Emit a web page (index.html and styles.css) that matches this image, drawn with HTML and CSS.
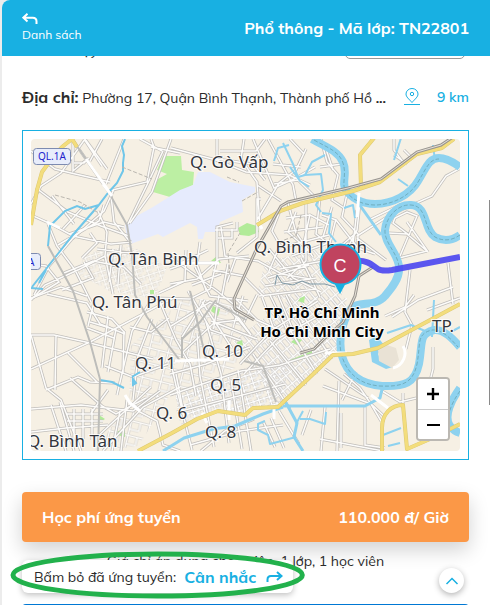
FILE: index.html
```html
<!DOCTYPE html>
<html lang="vi">

<head>
    <meta charset="UTF-8">
    <meta name="viewport" content="width=device-width, initial-scale=1.0">
    <title>Mã lớp: TN22801</title>
    <link rel="stylesheet" href="styles.css">
</head>

<body>
    <div class="app">
        <header class="topbar">
            <a class="back" href="#">
                <svg width="16" height="12" viewBox="0 0 16 12" fill="none" stroke="currentColor" stroke-width="2">
                    <path d="M5.500 .8 1.300 4.700l4.200 3.900M1.500 4.700h9.300q3.700 0 3.700 3.500V11" />
                </svg>
                <span>Danh sách</span>
            </a>
            <h1>Phổ thông - Mã lớp: TN22801</h1>
        </header>

        <main>
            <div class="row row-prev">
                <span class="prev-label">Số buổi dạy</span>
                <button class="outline-btn" type="button" aria-label="Chi tiết"></button>
            </div>

            <div class="row address">
                <p><strong>Địa chỉ:</strong> Phường 17, Quận Bình Thạnh, Thành phố Hồ <b>...</b></p>
                <a class="distance" href="#map">
                    <svg width="16" height="17" viewBox="0 0 16 17" fill="none" stroke="currentColor">
                        <path d="M8 14.500C5 11 2 9 2 6a6 5.500 0 0 1 12 0C14 9 11 11 8 14.500z" />
                        <circle cx="8" cy="6" r="1.700" />
                        <path d="M0 16.500h16" />
                    </svg>
                    <span>9 km</span>
                </a>
            </div>

            <div class="map-frame" id="map">
                <div class="map">
                    <svg class="map-canvas" viewBox="31 139 429 312" role="img" aria-label="Bản đồ">
                        <defs>
                            <pattern id="blocks" width="11" height="9" patternUnits="userSpaceOnUse" patternTransform="rotate(-18)">
                                <path d="M0 1.500h11M0 6h6M1.500 0v9M7 0v6" stroke="#c2c0bd" stroke-width="2.600" fill="none" />
                                <path d="M0 1.500h11M0 6h6M1.500 0v9M7 0v6" stroke="#fff" stroke-width="1.400" fill="none" />
                            </pattern>
                            <pattern id="blocks-steep" width="12" height="10" patternUnits="userSpaceOnUse" patternTransform="rotate(-40)">
                                <path d="M0 1.500h12M1.500 0v10M7.500 0v10" stroke="#c2c0bd" stroke-width="2.600" fill="none" />
                                <path d="M0 1.500h12M1.500 0v10M7.500 0v10" stroke="#fff" stroke-width="1.400" fill="none" />
                            </pattern>
                            <pattern id="blocks-wide" width="19" height="15" patternUnits="userSpaceOnUse" patternTransform="rotate(14)">
                                <path d="M0 1.500h19M1.500 0v15M11 1v9M1 10h10" stroke="#c2c0bd" stroke-width="2.600" fill="none" />
                                <path d="M0 1.500h19M1.500 0v15M11 1v9M1 10h10" stroke="#fff" stroke-width="1.400" fill="none" />
                            </pattern>
                            <!-- local streets, drawn twice: casing and fill -->
                            <g id="streets">
                                <path d="M31 151l24 18 16 4 39 9M72 139l36 52M31 204l10-18 20-13 24-34M36 188l32 24 33 14 28 10M52 196l22 28M85 139l22 30M84 139l18 27M102 139l-12 22M124 139l-18 45M114 189l-10 22-32 28-23 27-15 29M108 191l39-9 7-35-3-8M151 147l29 6M140 139l22 12M163 151l-16 34-19 39M130 223l22-31 19-53M73 142v29l12-10M74 163h10l5-5" />
                                <path d="M31 215l20 9 22 12 38 8 21-2M48 224l9 22 18 24 16 32M58 245l41-24 5-16M69 234l35-12 20 5M98 211l9 21-2 24-25 13-35 16-14 15M111 196l3 26 17 21M63 229l22-24M90 233l7 10-15 15M31 264l15 2 13 16-28 17M64 273l29-12 31 6 17 17M84 262l9 16-31 12M105 256l8 38M113 249l-4 33M121 245l-3 39M97 249l34 4" />
                                <path d="M31 335h23l36 8 63 16M31 369l59-27 32-17 53-28M31 335l15 53 15 12 20 51M56 335l-1 55M31 409l50-4 52 6 27-20M46 390l32-13 12 5 25 1M68 353l30 30M31 298l30-11 26 9M47 294l40 9 13 21 25 10M70 378l32 28 14 8 30-16M51 405l15 46M60 402l14 49M74 409v36M83 409v30M92 409v31M67 414h36M67 421h36M31 432l35-4 42-3M91 413l17-23" />
                                <path d="M87 312l25 7 13 14M90 322l20 6M94 302l-6 24M108 316l-6 52M116 329l-8 43M124 331l-1 42M87 328l27 10M105 366l28 11 35-13M150 302l-18 29-15 64M152 319l-14 37-5 44M130 327l21 5 18-14M157 295l19 45 14 24 6 32M138 411l19 10 6 24 17 6M120 411l-8 40M127 400l-6 51M97 437l54-50M103 451l40-44 37-20" />
                                <path d="M171 148l45 12 30 12 44 3M217 139v20l35 5 13 16M220 151h36l9-12M244 139l-3 20 16 23 3 45M253 139l21 49 20-9 21-12M268 139l25 46 3 16M257 185l24 16M261 199h-4v38l-20 16M257 220l22-37 17-13 10-21M274 184l24-4 20 20M289 175l21 10M273 164l28 3M290 139l14 15" />
                                <path d="M281 208l-9 23 8 14-11 26M286 218l24-3 19 10M288 203l8 30 17 24M306 201v60l-19 17M320 197l-4 37 19 15M296 212l-8 20 18 16M310 214l-7 33M284 232l39-5M287 246l42-11M292 256l36-13M280 269l54-10M268 278l41-13M265 286l51-8M259 296l57-7M269 249l24 29 28 14M301 258l19 39" />
                                <path d="M217 260l-7 29-20 10-39-1M217 260v-33l16-4M221 227l4 29 33 5 24 13 28 5M170 269l17-6 29 0M186 250l-1 31-26 12M200 242l-3 22 9 26M170 284l27-5 22-20 30-3M181 263l27-13M213 270l30 6 21 21M228 264l-6 32M221 274l-29 11M170 257l47 34 25 20M236 257l-9 25M195 267l15 29 38 5M215 230h22v-8M218 238h14v-9" />
                                <path d="M321 139l6 23 11 13-6 25 12 8M325 146l8 24M320 167l22-3M347 194l-5 23 16 17-1 39M360 202l-3 28-16 30M357 232l-24 21-2 23M322 215l14 5 22 28 17 6M332 207l-9 30M336 219l-8 32M357 210l-6 51M357 238l29 22M357 236l33-21 42-19 14-20 13-7M371 219l31-15M394 139v11l9 12M394 155l13 9M404 150l7 7" />
                                <path d="M395 218l12-6 10 4-8 19-16-12zM388 233l19 1 20 17M407 222l21 30M400 256l8-19M399 258l28-7M410 270l-5 42 7 13-6 24M448 263l5 41M427 310l33-12M392 317l26-17 35-13M385 316l20-9 9-12M433 347v22l-3 12M382 391l18 11 37-9M403 393v14M344 374l16 14 11 16 10 17M339 381l-2 70M325 369l43 29M323 386l48 18 14 13M365 407v38l20 3M320 439l63 12M341 413v35M325 407l-4 44M311 410l-9 25M356 372l-14 28" />
                                <path d="M192 450l-15-60-7-31M184 415l-8-41M214 447l-14-71-3-43M229 443l-8-69-15-52M242 449l-11-69M251 451l-13-81M263 421l12 26M271 418l13 30M279 411l20 33M190 445l50-14 43-6M201 451l24-20 29-12M170 395l71-24 39-6 50-16M177 412l108-28M170 374l36-10 44-17M240 364l32-34 46-29M253 354l37 55M270 341l36 44M287 325l30 49M300 311l30 45M244 374l33-35 45-25" />
                                <path d="M171 326l39-24 22 10 18 22M182 337l23-37M183 352l31-29 25-3M202 302l30 46M231 307l20 28M211 321l46 18M219 295l-5 31M234 297l23 23 20 9M243 296l-9 28M188 291l23 39 29 10M257 295l-13 27M262 297l14 38M270 295l19 39M278 295l15 35M286 295l17 34" />
                            </g>
                        </defs>

                        <rect x="31" y="139" width="429" height="312" fill="#f6f0e4" />

                        <path fill="#bcefa3" d="M163 156h18l1 14 12 2-1 13-23 12-17-5 5-13 9-5-10-4z" />
                        <path fill="#e6ebfd" d="M125 225l8-7 20-11 27-17 13-5 5-13h12l20 10 25 5v5l-13 8 1 12-23 10-3 10h-12l-2 7h-5l-1-12-7-4-27 14-5-3-22 8-8 3z" />

                        <!-- dense blocks -->
                        <path fill="url(#blocks)" d="M175 391l67-22 50-13-12 50-28 2-9 7-27-6-36 16z" />
                        <path fill="url(#blocks-steep)" d="M233 341l62-46 52 3-7 55-45 36-17 15z" opacity=".9" />
                        <path fill="url(#blocks-wide)" d="M131 345l55-48 60 8-8 62-68 28-32 52-44 3 35-46z" opacity=".8" />
                        <path fill="url(#blocks-steep)" d="M265 262l62-15 19 27-6 32-55-7-28-4z" opacity=".8" />
                        <path fill="url(#blocks)" d="M84 253l49-7 34 21-12 32-46-8-31-17z" opacity=".6" />

                        <g fill="#b2eb99">
                            <path d="M238 228l9-5 10 3 2 6-10 4-9-1zM211 261l6-5 4 7zM213 306l7 3-2 7-7-5zM237 342l5-2 1 5-5 2zM300 298l5-2-1 7-6-2zM291 342l5-4 6 2-5 5zM99 415l6 4-6 4zM118 431l7-1v7l-8-2zM150 290h4v4h-4z" />
                            <path d="M290 360l22-9v2l-22 9z" />
                        </g>

                        <use href="#streets" fill="none" stroke="#c0bebb" stroke-width="3" />
                        <use href="#streets" fill="none" stroke="#fdfcfa" stroke-width="1.500" />

                        <!-- rivers and canals -->
                        <g fill="none" stroke="#8ed2ef" stroke-linejoin="round">
                            <path stroke-width="8" d="M312 139c14 8 26 12 31 23s-2 22 3 28c5 8 16 14 29 14 17 0 35-9 43-23 8-13 11-23 21-23 6 0 14 4 21 9M460 235c-7 5-16 7-25 2-12-8-7-31-24-32-14-1-25 13-26 25-1 13 13 23 14 37 1 11-7 21-14 29-10 12-28 4-35 14-8 12-12 31-8 46 5 18 18 28 40 30 23 1 33-3 37-22 4-21-1-30 15-34 10-1 19 9 26 17M460 388c-8 11-17 28-10 38 3 4 7 6 10 7" />
                            <path stroke-width="3" d="M359 204l22 31M283 407l-20 7-28 12-22 3-29 9-21 13M283 406h82l15-8 3-13M285 401l12 22-3 14 9 14" />
                            <path stroke-width="2" d="M283 143l10 21 5 13 7-2 7-13 13-7M305 175l16-1 2 16-7 15 5 7M290 167l10 14 9 6M289 145l-11 3-4 13M394 160l7-22M433 145l2 16M408 186l-10-7M322 213l9 1-2 19 7 9M344 208l9-3 2 13M387 333l24-8 14 6M432 337l2-37M449 333l11-6M383 435l18-7M388 446l12-3M296 437l-26 7-2-9-10-5v-6l7-3M303 411l-7 13M300 419h10l15 5 1-12" />
                        </g>
                        <path fill="#8ed2ef" d="M369 340l8-4 7 9-6 9 4 8 11 5-7 2-14-7z" />
                        <path fill="#e9e2d5" d="M378 349l9-4 9 3 3 12-7 8-13-7z" />
                        <g fill="none" stroke="#6fc6e9" stroke-width="2">
                            <path d="M125 139l-3 7 2 9-1 8 0 8-6 12-9 10-10 13-26 30-15 19-25 32M99 205l-14 4-8-3-12 5-15 15-2 20M31 288l12 1M46 270l-7 13M100 380l12 2 12 6M132 377l8-5" />
                            <path d="M133 379l3 4-3 2z" fill="#78c9e9" />
                        </g>
                        <g fill="none" stroke="#71aebe" stroke-width="1" stroke-dasharray="4 2">
                            <path d="M314 140c14 8 25 11 29 23s-2 22 3 28c5 8 16 14 29 14 17 0 35-9 43-23 8-13 11-23 21-23M460 235c-7 5-16 7-25 2-12-8-7-31-24-32-14-1-25 13-26 25-1 13 13 23 14 37M342 323c-8 34 7 61 38 63 23 1 33-3 37-22 4-21-1-30 15-34 10-1 19 9 26 17M460 391c-8 11-14 25-10 32" />
                        </g>

                        <g fill="none" stroke="#bdbdba" stroke-width="2">
                            <path d="M72 139l36 52 19 34 5 30 3 40 12 22M48 246l25 45 17 51 10 37-2 72M182 339l18-17 16-22M190 291l16 68M147 317l34 45M182 358v-21M244 361l19 5 13 36M216 303l30 17" />
                        </g>
                        <g fill="none" stroke="#fff" stroke-width="3">
                            <path d="M86 159l22 31M103 184l9 12M181 263h38M175 361l54-2M258 221l4 8M359 193l-2 24M229 401v19M202 413l5 10M403 346c5 8 0 20-10 22M371 395l17 13M274 407v12M325 353h22M125 395l5 8 10 8M47 222l13 6" />
                        </g>
                        <path d="M55 195l25 7 17 10M122 167l30 12M242 201l16-9M227 177l12 5M230 275l-2-22 12-20M301 215l-5 21-18 6" fill="none" stroke="#b9b5ae" stroke-dasharray="4 2" />

                        <!-- main roads -->
                        <g fill="none" stroke="#dcc872" stroke-width="4" stroke-linejoin="round">
                            <path id="roads" d="M31 225l6-35 5-18 11-15 9-10 10-8 5 8M257 225l23-14 23-8 50-12 27-9 37-28 25-6 12-9M361 188l-1-33 14-17M138 451l34-18 25-14 21-8 27 4 8-7 25-1 30-28 25-24 20-1 25-6 82-44M382 451v-23c0-14 9-23 21-23l4 44 23-10 30-15" />
                            <use href="#roads" stroke="#f3dd7c" stroke-width="3" />
                        </g>
                        <g fill="none">
                            <path stroke="#999590" stroke-width="3" d="M254 320l-19-11-1-10 3-7 20-44 24-42 7-4 60-14 33-9 36-27 24-7 12-8M300 353l14-4 9-9 20-18 12-26 4-20 14-9" />
                            <path stroke="#e6e1d7" stroke-width="1" d="M254 320l-19-11-1-10 3-7 20-44 24-42 7-4 60-14 33-9 36-27 24-7 12-8M300 353l14-4 9-9 20-18 12-26 4-20 14-9" />
                            <path stroke="#7f99a6" d="M275 285l2-10 5 8 11 2 9-4 8 3 15 0 10 3" />
                        </g>
                        <path d="M355 261c12-1 16 3 23 8 3 2 7 2 14 1l68-13" fill="none" stroke="#4a45f0" stroke-width="6" opacity=".9" />

                        <g class="shield">
                            <rect x="33.500" y="148.500" width="37" height="16" rx="3" />
                            <text x="38" y="160">QL.1A</text>
                            <rect x="20.500" y="253.500" width="20" height="16" rx="3" />
                            <text x="28" y="266">A</text>
                        </g>

                        <g class="district">
                            <text x="190" y="168">Q. Gò Vấp</text>
                            <text x="108" y="265">Q. Tân Bình</text>
                            <text x="254" y="253">Q. Bình Thạnh</text>
                            <text x="92" y="308">Q. Tân Phú</text>
                            <text x="135" y="369">Q. 11</text>
                            <text x="202" y="357">Q. 10</text>
                            <text x="210" y="391">Q. 5</text>
                            <text x="156" y="419">Q. 6</text>
                            <text x="205" y="438">Q. 8</text>
                            <text x="27" y="447">Q. Bình Tân</text>
                            <text x="432" y="332">TP.</text>
                        </g>
                        <g class="city">
                            <text x="322" y="318">TP. Hồ Chí Minh</text>
                            <text x="322" y="337">Ho Chi Minh City</text>
                            <text x="398" y="462">Q. 7</text>
                        </g>
                        <g class="pin">
                            <path d="M333 281l7 13 7-13z" />
                            <circle cx="340.500" cy="264.500" r="20" />
                            <text x="340" y="272">C</text>
                        </g>
                    </svg>
                    <div class="zoom">
                        <button type="button" aria-label="Phóng to">
                            <svg width="14" height="14" viewBox="0 0 14 14"><path d="M1 7h12M7 1v12" stroke="#000" stroke-width="2.400" /></svg>
                        </button>
                        <button type="button" aria-label="Thu nhỏ">
                            <svg width="14" height="14" viewBox="0 0 14 14"><path d="M1 7h13" stroke="#000" stroke-width="2" /></svg>
                        </button>
                    </div>
                </div>
            </div>

            <div class="fee">
                <span>Học phí ứng tuyển</span>
                <span>110.000 đ/ Giờ</span>
            </div>

            <p class="note">Giá chỉ áp dụng cho gviên, 1 lớp, 1 học viên</p>
            <div class="next-card"></div>
        </main>

        <div class="applied">
            <span>Bấm bỏ đã ứng tuyển:</span>
            <a href="#">Cân nhắc
                <svg width="17" height="12" viewBox="0 0 17 12" fill="none" stroke="currentColor" stroke-width="2">
                    <path d="M11 1l4.500 4-4.500 4M15 5H5Q1.500 5 1.500 8.500V11" />
                </svg>
            </a>
            <svg class="highlight" viewBox="0 0 296 50" fill="none" preserveAspectRatio="none">
                <ellipse cx="148" cy="25" rx="145" ry="21" stroke="#22b14c" stroke-width="5" />
            </svg>
        </div>

        <button class="to-top" type="button" aria-label="Lên đầu trang">
            <svg width="14" height="8" viewBox="0 0 14 8" fill="none" stroke="currentColor" stroke-width="1.500">
                <path d="M1.500 7 7 1.500 12.500 7" />
            </svg>
        </button>
        <div class="scroll-thumb"></div>
    </div>
</body>

</html>
```

FILE: styles.css
```css
* {
    box-sizing: border-box;
    margin: 0;
    padding: 0;
}

body {
    background: #ececec;
    font-family: Mulish, 'Lato', sans-serif;
    font-size: 14px;
    color: #2b2b2b;
    height: 100vh;
    overflow: hidden;
}

a {
    color: #18b0e2;
    text-decoration: none;
}

button {
    border: none;
    background: #fff;
    cursor: pointer;
}

.app {
    position: relative;
    height: 100vh;
    margin-left: 2px;
    background: #fff;
    border-radius: 8px 0 0 0;
    overflow: hidden;
}

.topbar {
    position: relative;
    z-index: 2;
    display: flex;
    justify-content: space-between;
    align-items: center;
    height: 56px;
    padding: 0 21px 0 20px;
    background: #18b0e2;
    color: #fff;
}

.topbar h1 {
    font-size: 16px;
    line-height: 24px;
}

.back {
    display: flex;
    flex-direction: column;
    gap: 2px;
    color: #fff;
    font-size: 12px;
    line-height: 16px;
}

main {
    padding: 0 21px 0 20px;
}

.row {
    display: flex;
    justify-content: space-between;
    align-items: center;
}

/* scrolled most of the way under the top bar */
.row-prev {
    height: 32px;
    margin-top: -29px;
    padding-right: 4px;
}

.prev-label {
    padding-top: 14px;
}

.outline-btn {
    width: 120px;
    height: 32px;
    border: 1px solid #999;
    border-radius: 5px;
}

.address {
    height: 71px;
    padding-top: 4px;
    white-space: nowrap;
}

.address strong {
    font-size: 16px;
}

.distance {
    display: flex;
    align-items: center;
    gap: 17px;
    font-weight: 600;
}

.map-frame {
    padding: 8px;
    border: 1px solid #18b0e2;
}

.map {
    position: relative;
    border-radius: 4px;
    overflow: hidden;
}

.map-canvas {
    display: block;
    width: 100%;
}

.district {
    font-family: 'Noto Sans', sans-serif;
    font-size: 17px;
    fill: #33353b;
    stroke: #fffc;
    stroke-width: 2px;
    paint-order: stroke;
}

.city {
    font-family: 'Noto Sans', sans-serif;
    font-size: 15px;
    font-weight: 700;
    text-anchor: middle;
    stroke: #fffc;
    stroke-width: 2px;
    paint-order: stroke;
}

.shield rect {
    fill: #e8edfb;
    stroke: #7d8bb0;
}

.shield text {
    font-family: 'Noto Sans', sans-serif;
    font-size: 10px;
    fill: #2222cc;
}

.pin circle {
    fill: #c0435f;
    stroke: #18b0e2;
    stroke-width: 2px;
}

.pin path {
    fill: #18b0e2;
}

.pin text {
    font-family: 'Liberation Sans', sans-serif;
    font-size: 18px;
    text-anchor: middle;
    fill: #fff;
}

.zoom {
    position: absolute;
    right: 10px;
    bottom: 10px;
    display: flex;
    flex-direction: column;
    border: 2px solid #bbb8b2;
    border-radius: 4px;
    overflow: hidden;
}

.zoom button {
    display: grid;
    place-items: center;
    width: 30px;
    height: 30px;
}

.zoom button + button {
    border-top: 1px solid #ccc;
}

.fee {
    display: flex;
    justify-content: space-between;
    align-items: center;
    height: 50px;
    margin-top: 32px;
    padding: 0 20px;
    background: #fb9847;
    border-radius: 4px;
    box-shadow: 0 8px 20px rgba(0, 0, 0, 0.18);
    color: #fff;
    font-size: 16px;
    font-weight: 700;
}

.note {
    margin: 10px 0 33px;
    line-height: 19px;
    text-align: center;
}

.next-card {
    height: 50px;
    border-radius: 4px;
    background: #0078d4;
}

.applied {
    position: absolute;
    left: 20px;
    bottom: 12px;
    display: flex;
    align-items: center;
    gap: 8px;
    height: 33px;
    padding: 0 10px 0 12px;
    background: #fff;
    border-radius: 6px;
    box-shadow: 0 2px 6px rgba(0, 0, 0, 0.25);
}

.applied a {
    display: flex;
    align-items: center;
    gap: 10px;
    font-size: 16px;
    font-weight: 700;
}

.highlight {
    position: absolute;
    left: -12px;
    top: -10px;
    width: calc(100% + 24px);
    height: 50px;
    pointer-events: none;
}

.to-top {
    position: absolute;
    right: 26px;
    bottom: 12px;
    display: grid;
    place-items: center;
    width: 25px;
    height: 25px;
    border-radius: 50%;
    box-shadow: 0 2px 6px rgba(0, 0, 0, 0.3);
    color: #18b0e2;
}

.scroll-thumb {
    position: absolute;
    right: 0;
    top: 200px;
    width: 1px;
    height: 205px;
    background: #8a8a8a;
}
```
